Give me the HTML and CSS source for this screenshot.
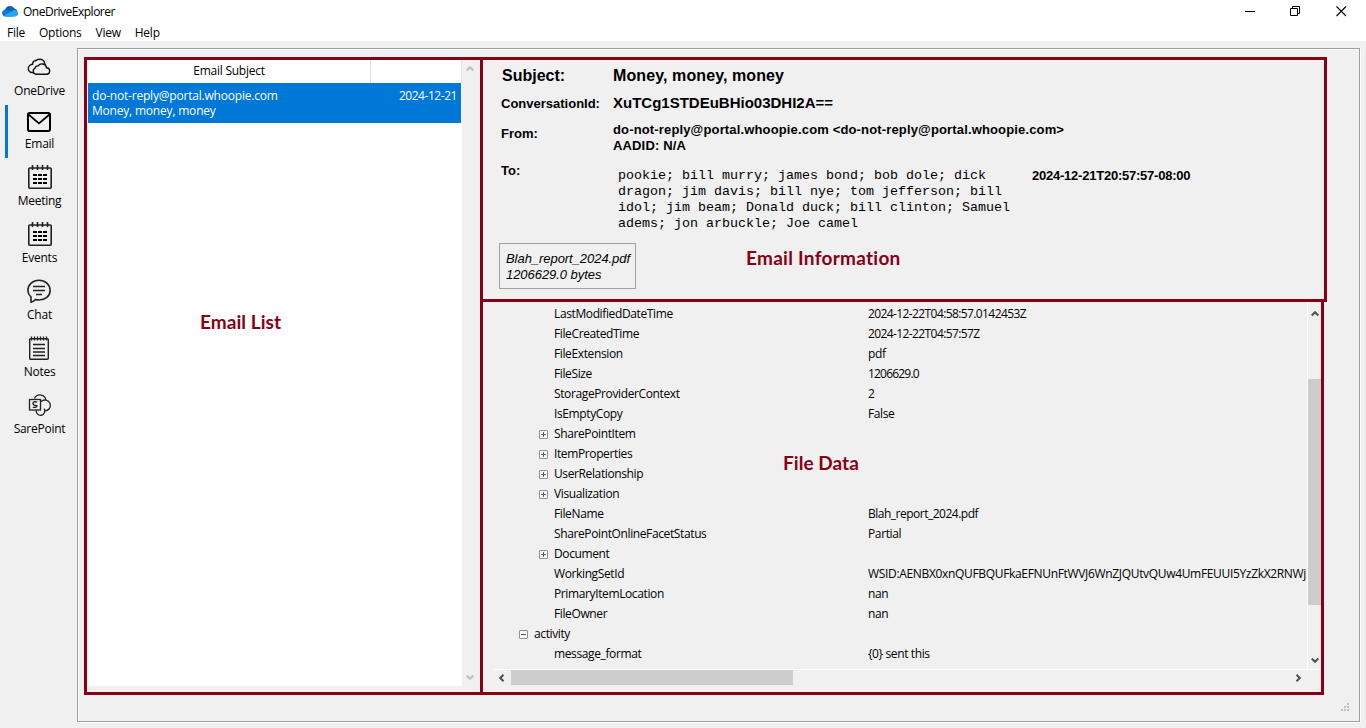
FILE: index.html
```html
<!DOCTYPE html>
<html lang="en">
<head>
<meta charset="utf-8">
<title>OneDriveExplorer</title>
<link rel="stylesheet" href="styles.css">
</head>
<body>
<div class="window">
  <header class="top">
    <div class="titlebar">
      <svg class="logo" viewBox="0 0 17 12" width="17" height="12"><path d="M4 11.5A3.6 3.6 0 0 1 3.2 4.6 5 5 0 0 1 12.3 3.4 4 4 0 0 1 13 11z" fill="#0364b8"/><path d="M3.8 11.5A3.5 3.5 0 1 1 5.5 5.1L14 9 12 11.5z" fill="#0f78d4"/><path d="M4.6 11.5l-2-1.2L10 6.2q1.3-1.6 3.2-1A3.2 3.2 0 0 1 13.5 11.5z" fill="#28a8ea"/></svg>
      <span class="app-name">OneDriveExplorer</span>
      <div class="controls">
        <svg viewBox="0 0 11 11" width="11" height="11"><path d="M1 5.5h10" stroke="#000" fill="none"/></svg>
        <svg viewBox="0 0 11 11" width="11" height="11"><path d="M.5 2.500h7v7h-7zM2.500 2.500v-2h7v7h-2" stroke="#000" fill="none"/></svg>
        <svg viewBox="0 0 11 11" width="11" height="11"><path d="M.5.5l9.500 9.500M10 .5l-9.500 9.500" stroke="#000" stroke-width="1.1" fill="none"/></svg>
      </div>
    </div>
    <nav class="menu"><span>File</span><span>Options</span><span>View</span><span>Help</span></nav>
  </header>
  <div class="body">
    <aside class="sidebar">
      <div class="tab first">
        <svg class="nudge" viewBox="0 0 24 24" width="24" height="24" fill="#f0f0f0" stroke="#111" stroke-width="1.400"><path d="M3.500 17.300A4.200 4.200 0 0 1 3 10.200Q4.500 9 5.500 9.300A4 4 0 0 1 9 5.500Q10.500 4.300 12.500 4.300A5 5 0 0 1 17.800 8.500L18.500 14 8 18z"/><path d="M9 19.300a3.300 3.300 0 0 1-.9-6.200 2.800 2.800 0 0 1 3-2.200 4.700 4.700 0 0 1 8.500 1.900 3.300 3.300 0 0 1 .6 6.500z"/></svg>
        <span>OneDrive</span>
      </div>
      <div class="tab selected">
        <svg class="nudge" viewBox="0 0 24 24" width="24" height="24" fill="none" stroke="#000" stroke-width="2"><rect x="1" y="3" width="22" height="18" rx="1.800"/><path d="M1.500 4.500 12 13.500 22.500 4.500" stroke-width="1.700"/></svg>
        <span>Email</span>
      </div>
      <div class="tab">
        <svg viewBox="0 0 24 24" width="24" height="24" fill="none" stroke="#222" stroke-width="1.600"><rect x=".8" y="3" width="22.400" height="20.200" rx="1"/><path d="M4.500 0v5M9.500 0v5M14.500 0v5M19.500 0v5"/><path d="M5 10h14M5 14h14M5 18h14" stroke="#000" stroke-width="2.200" stroke-dasharray="4 1"/></svg>
        <span>Meeting</span>
      </div>
      <div class="tab">
        <svg viewBox="0 0 24 24" width="24" height="24" fill="none" stroke="#222" stroke-width="1.600"><rect x=".8" y="3" width="22.400" height="20.200" rx="1"/><path d="M4.500 0v5M9.500 0v5M14.500 0v5M19.500 0v5"/><path d="M5 10h14M5 14h14M5 18h14" stroke="#000" stroke-width="2.200" stroke-dasharray="4 1"/></svg>
        <span>Events</span>
      </div>
      <div class="tab">
        <svg class="nudge" viewBox="0 0 24 24" width="24" height="24" fill="none" stroke="#222" stroke-width="1.600"><path d="M4 23.200V18C2 16 .9 14 .9 11.400.9 5.700 5.800 1.200 12 1.200s11.100 4.300 11.100 10.200S18.200 21 12 21q-2 0-3.500-.5Q7 22.500 4 23.200z"/><path d="M6 7.500h12M6 11.500h12M9 15.500h6"/></svg>
        <span>Chat</span>
      </div>
      <div class="tab">
        <svg class="nudge" viewBox="0 0 24 24" width="24" height="24" fill="none" stroke="#222" stroke-width="1.400"><rect x="2.700" y="2.700" width="18.600" height="20.500" rx="1"/><path d="M4.500 .5v4M7.500 .5v4M10.500 .5v4M13.500 .5v4M16.500 .5v4M19.500 .5v4" stroke-width="1.300"/><path d="M6 8.500h12M6 12.500h12M6 16h12M6 19.500h12" stroke-width="1.300"/></svg>
        <span>Notes</span>
      </div>
      <div class="tab">
        <svg class="nudge" viewBox="0 0 24 24" width="24" height="24" fill="none" stroke="#222" stroke-width="1.300"><path d="M7.500 5.500A6 6 0 0 1 19 7.800M14 8.700A5.400 5.400 0 1 1 17.300 17.800M9.500 17A4.200 4.200 0 1 0 17 15.700"/><rect x="2.500" y="6.500" width="11" height="10.500"/><path d="M10.200 9.100Q6 8.100 6 10.300T9.900 12.600Q9.900 15 5.800 14.100" stroke-width="1.400"/></svg>
        <span>SarePoint</span>
      </div>
    </aside>
    <main class="frame">
      <section class="list-panel">
        <div class="list">
          <div class="list-head"><span class="col-subject">Email Subject</span><span class="col-date"></span></div>
          <div class="mail"><div class="mail-line"><span class="addr">do-not-reply@portal.whoopie.com</span><span class="mail-date">2024-12-21</span></div><div class="mail-subject">Money, money, money</div></div>
          <div class="note list-note">Email List</div>
        </div>
        <div class="vbar dim">
          <svg viewBox="0 0 8 7" width="8" height="7"><path d="M.7 5.500 4 2.200 7.300 5.500"/></svg>
          <svg viewBox="0 0 8 7" width="8" height="7"><path d="M.7 1.500 4 4.800 7.300 1.500"/></svg>
        </div>
      </section>
      <div class="right">
        <section class="info-panel">
          <dl class="fields">
            <dt class="big">Subject:</dt><dd class="big">Money, money, money</dd>
            <dt>ConversationId:</dt><dd class="conv">XuTCg1STDEuBHio03DHI2A==</dd>
            <dt class="from-label">From:</dt><dd class="from">do-not-reply@portal.whoopie.com &lt;do-not-reply@portal.whoopie.com&gt;<br>AADID: N/A</dd>
            <dt class="to-label">To:</dt>
            <dd class="to"><div class="recipients">pookie; bill murry; james bond; bob dole; dick<br>dragon; jim davis; bill nye; tom jefferson; bill<br>idol; jim beam; Donald duck; bill clinton; Samuel<br>adems; jon arbuckle; Joe camel</div><div class="sent">2024-12-21T20:57:57-08:00</div></dd>
          </dl>
          <div class="attach-row"><div class="attachment">Blah_report_2024.pdf<br>1206629.0 bytes</div><div class="note info-note">Email Information</div></div>
        </section>
        <section class="data-panel">
          <div class="tree-view">
            <div class="tree">
              <div class="row"><i></i><span>LastModifiedDateTime</span><b class="num">2024-12-22T04:58:57.0142453Z</b></div>
              <div class="row"><i></i><span>FileCreatedTime</span><b class="num">2024-12-22T04:57:57Z</b></div>
              <div class="row"><i></i><span>FileExtension</span><b>pdf</b></div>
              <div class="row"><i></i><span>FileSize</span><b class="num size">1206629.0</b></div>
              <div class="row"><i></i><span>StorageProviderContext</span><b>2</b></div>
              <div class="row"><i></i><span>IsEmptyCopy</span><b>False</b></div>
              <div class="row"><i class="box plus"></i><span>SharePointItem</span></div>
              <div class="row"><i class="box plus"></i><span>ItemProperties</span></div>
              <div class="row"><i class="box plus"></i><span>UserRelationship</span></div>
              <div class="row"><i class="box plus"></i><span>Visualization</span></div>
              <div class="row"><i></i><span>FileName</span><b class="file">Blah_report_2024.pdf</b></div>
              <div class="row"><i></i><span>SharePointOnlineFacetStatus</span><b>Partial</b></div>
              <div class="row"><i class="box plus"></i><span>Document</span></div>
              <div class="row"><i></i><span>WorkingSetId</span><b class="wsid">WSID:AENBX0xnQUFBQUFkaEFNUnFtWVJ6WnZJQUtvQUw4UmFEUUI5YzZkX2RNWj</b></div>
              <div class="row"><i></i><span>PrimaryItemLocation</span><b>nan</b></div>
              <div class="row"><i></i><span>FileOwner</span><b>nan</b></div>
              <div class="row parent"><i class="box"></i><span>activity</span></div>
              <div class="row"><i></i><span>message_format</span><b>{0} sent this</b></div>
            </div>
            <div class="note data-note">File Data</div>
            <div class="vbar">
              <svg viewBox="0 0 8 7" width="8" height="7"><path d="M.7 5.500 4 2.200 7.300 5.500"/></svg>
              <div class="vthumb"></div>
              <svg viewBox="0 0 8 7" width="8" height="7"><path d="M.7 1.500 4 4.800 7.300 1.500"/></svg>
            </div>
          </div>
          <div class="hbar">
            <svg viewBox="0 0 7 8" width="7" height="8"><path d="M5.500.7 2.200 4 5.500 7.300"/></svg>
            <div class="hthumb"></div>
            <svg viewBox="0 0 7 8" width="7" height="8"><path d="M1.500.7 4.800 4 1.500 7.300"/></svg>
          </div>
        </section>
      </div>
      <svg class="grip" viewBox="0 0 8 8" width="8" height="8" fill="#bfbfbf"><path d="M6 0h2v2H6zM3 3h2v2H3zM6 3h2v2H6zM0 6h2v2H0zM3 6h2v2H3zM6 6h2v2H6z"/></svg>
    </main>
  </div>
</div>
</body>
</html>
```
FILE: styles.css
```css
* { box-sizing: border-box; }
body { margin: 0; font: 12px/16px "Open Sans", "Noto Sans", sans-serif; letter-spacing: -0.25px; color: #000; }
svg { display: block; flex: none; }
.window { width: 1366px; height: 728px; display: flex; flex-direction: column; background: #f0f0f0; overflow: hidden; white-space: nowrap; }
.top { height: 41px; background: #fff; flex: none; }
.titlebar { height: 22px; display: flex; align-items: center; padding-left: 2px; }
.app-name { margin-left: 4px; padding-top: 2px; letter-spacing: -0.5px; }
.controls { margin-left: auto; display: flex; gap: 35px; padding-right: 19px; }
.menu { display: flex; gap: 14px; padding: 3px 0 0 7px; }
.body { flex: 1; display: flex; min-height: 0; }
.sidebar { width: 77px; padding-top: 7px; flex: none; }
.tab { height: 57px; padding: 3px 0 0 2px; display: flex; flex-direction: column; align-items: center; gap: 4px; }
.tab.first { height: 57px; padding-top: 7px; }
.tab.selected { height: 53px; margin: 0 0 4px 5px; border-left: 3px solid #0078d7; padding: 5px 6px 0 0; gap: 2px; }
.nudge { margin-right: 2px; }
.frame { position: relative; width: 1283px; height: 674px; margin-top: 7px; border: 1px solid #a0a0a0; box-shadow: inset 1px 1px #fff, 1px 1px #fff; display: flex; padding: 8px 0 0 6px; }
.list-panel { width: 399px; height: 638px; border: 3px solid #880015; display: flex; padding-left: 1px; flex: none; }
.list { width: 374px; height: 626px; background: #fff; }
.list-head { height: 23px; display: flex; line-height: 22px; text-align: center; }
.col-subject { width: 283px; border-right: 1px solid #e2e2e2; }
.col-date { width: 91px; border-right: 1px solid #e2e2e2; }
.mail { width: 373px; height: 40px; background: #0078d7; color: #fff; padding: 5px 4px 0; line-height: 15px; letter-spacing: -0.2px; }
.mail-line { display: flex; justify-content: space-between; }
.mail-date { letter-spacing: -0.45px; }
.note { font: bold 19px/24px Lato, "Open Sans", sans-serif; letter-spacing: 0.05px; font-variant-ligatures: none; color: #880015; }
.list-note { padding: 187px 0 0 112px; }
.vbar { width: 14px; display: flex; flex-direction: column; align-items: center; justify-content: space-between; }
.vbar path, .hbar path { fill: none; stroke: #505050; stroke-width: 2; }
.list-panel .vbar { height: 626px; padding: 5px 0 5px; width: 15px; }
.vbar.dim path { stroke: #bfbfbf; }
.right { width: 847px; margin-left: -3px; }
.info-panel { height: 245px; border: 3px solid #880015; font: bold 13px/16px "Liberation Sans", Arial, sans-serif; letter-spacing: 0; }
.fields { margin: 0; padding: 5px 0 0 18px; display: grid; grid-template-columns: 112px 1fr; grid-template-rows: 22px 34px 36px 78px; height: 183px; }
.fields dd { margin: 0; }
.big { font-size: 16px; line-height: 22px; letter-spacing: 0.1px; }
.fields dt.big { padding-left: 1px; letter-spacing: 0; }
.fields dt:not(.big) { line-height: 33px; }
.fields dt.from-label:not(.big) { line-height: 26px; }
.fields dt.to-label:not(.big) { line-height: 27px; }
.fields .conv { font-size: 15px; line-height: 32px; }
.fields .from { padding-top: 1px; letter-spacing: 0.15px; }
.to { display: flex; }
.recipients { width: 419px; padding: 11px 0 0 5px; font: 13.333px/16px "Liberation Mono", monospace; }
.sent { padding-top: 11px; letter-spacing: -0.23px; }
.attach-row { display: flex; padding-left: 16px; }
.attachment { width: 137px; height: 46px; border: 1px solid #a0a0a0; padding: 7px 6px 0; font: italic 13px/16px "Liberation Sans", Arial, sans-serif; letter-spacing: -0.05px; }
.info-note { margin-left: 110px; padding-top: 3px; letter-spacing: 0.27px; }
.data-panel { width: 844px; height: 396px; margin-top: -3px; border: 3px solid #880015; padding-left: 11px; }
.tree-view { position: relative; height: 368px; display: flex; border-bottom: 1px solid #fff; }
.tree { width: 814px; height: 367px; border-right: 1px solid #fff; padding: 2px 0 0 45px; overflow: hidden; letter-spacing: -0.38px; }
.row { height: 20px; line-height: 20px; display: grid; grid-template-columns: 15px 314px 1fr; align-items: center; }
.row b { font-weight: normal; }
.row .num { letter-spacing: -0.6px; }
.row .size { letter-spacing: -0.8px; }
.row .file { letter-spacing: -0.5px; }
.row .wsid { letter-spacing: -0.33px; }
.row.parent { margin-left: -20px; }
.box { width: 9px; height: 9px; border: 1px solid #919191; border-radius: 1px; background: linear-gradient(#3c5aa8, #3c5aa8) center/5px 1px no-repeat, #fafafa; }
.box.plus { background: linear-gradient(#3c5aa8, #3c5aa8) center/5px 1px no-repeat, linear-gradient(#3c5aa8, #3c5aa8) center/1px 5px no-repeat, #fafafa; }
.data-note { position: absolute; left: 289px; top: 149px; }
.tree-view .vbar { width: 13px; padding: 8px 0 5px; }
.vthumb { width: 13px; height: 226px; background: #cdcdcd; margin: 62px 0 52px; }
.hbar { display: flex; align-items: center; height: 15px; padding-left: 4px; }
.hthumb { width: 282px; height: 15px; background: #cdcdcd; margin: 0 502px 0 6px; }
.grip { position: absolute; right: 10px; bottom: 10px; }
```
